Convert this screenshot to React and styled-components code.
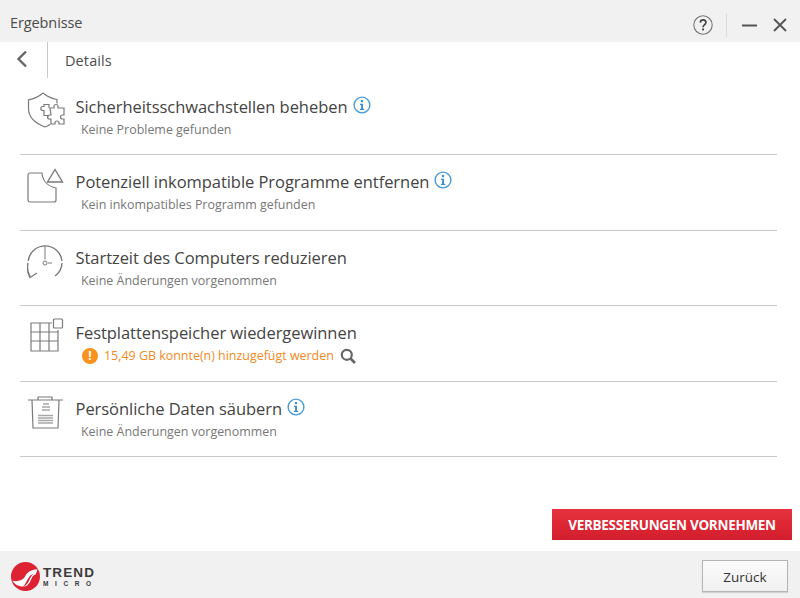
import React from "react";
import styled, { createGlobalStyle } from "styled-components";

const Global = createGlobalStyle`
  html, body { margin: 0; padding: 0; background: #fff; }
  body { font-family: "Open Sans", "Noto Sans", "Liberation Sans", sans-serif; }
`;

const Page = styled.div`
  width: 800px;
  height: 598px;
  display: flex;
  flex-direction: column;
  overflow: hidden;
  background: #fff;
`;

const TitleBar = styled.header`
  height: 42px;
  flex: none;
  display: flex;
  align-items: center;
  justify-content: space-between;
  padding: 0 13px 0 10px;
  background: #f1f1f1;
`;

const WindowTitle = styled.div`
  font-size: 14.5px;
  color: #4b4b4b;
  letter-spacing: -0.1px;
  margin-top: 2px;
`;

const WindowControls = styled.div`
  display: flex;
  align-items: center;
  margin-top: 7px;
`;

const ControlIcon = styled.svg`
  display: block;
  margin-left: ${(p) => p.$gap || 0}px;
`;

const ControlSeparator = styled.div`
  width: 1px;
  height: 24px;
  background: #dcdcdc;
  margin-left: 13px;
`;

const SubHeader = styled.div`
  height: 36px;
  flex: none;
  display: flex;
  align-items: center;
`;

const BackSlot = styled.div`
  width: 48px;
  height: 36px;
  display: flex;
  align-items: center;
  padding: 0 0 2px 16px;
  box-sizing: border-box;
  border-right: 1px solid #c9c9c9;
`;

const SubTitle = styled.div`
  margin: 1px 0 0 17px;
  font-size: 14.5px;
  color: #4d4d4d;
  letter-spacing: 0.1px;
`;

const Main = styled.main`
  flex: 1;
  display: flex;
  flex-direction: column;
  min-height: 0;
`;

const List = styled.div`
  margin: 1.5px 23px 0 20px;
  display: flex;
  flex-direction: column;
`;

const Row = styled.section`
  height: 75.5px;
  box-sizing: border-box;
  border-bottom: 1px solid #c8c8c8;
  display: grid;
  grid-template-columns: 55.5px 1fr;
  grid-template-rows: auto auto;
  align-content: start;
`;

const RowIcon = styled.div`
  grid-row: 1 / 3;
  padding: 10.5px 0 0 7px;
`;

const RowTitle = styled.div`
  display: flex;
  align-items: center;
  gap: 5px;
  height: 30px;
  margin-top: 11.5px;
  font-size: 16.5px;
  color: #444;
  letter-spacing: -0.05px;
  white-space: nowrap;
`;

const InfoIcon = styled.svg`
  display: block;
  margin-top: -3px;
`;

const RowDetail = styled.div`
  display: flex;
  align-items: center;
  height: 18px;
  margin: -1px 0 0 5.5px;
  font-size: 12.45px;
  color: ${(p) => (p.$warn ? "#f08a24" : "#777")};
  white-space: nowrap;
`;

const WarnBadge = styled.span`
  width: 16px;
  height: 16px;
  border-radius: 50%;
  background: #f7931e;
  color: #fff;
  font-size: 12px;
  font-weight: 700;
  line-height: 16px;
  text-align: center;
  margin: 0 6px 0 1px;
`;

const SearchIcon = styled.svg`
  display: block;
  margin-left: 6px;
`;

const ActionBar = styled.div`
  margin-top: auto;
  display: flex;
  justify-content: flex-end;
  padding: 0 8px 11px 0;
`;

const PrimaryButton = styled.button`
  width: 240px;
  height: 31px;
  padding: 0;
  border: 0;
  background: linear-gradient(180deg, #e5323f 0%, #dc2433 60%, #d11f2d 100%);
  color: #fff;
  font-family: inherit;
  font-size: 13.5px;
  font-weight: 700;
  letter-spacing: -0.3px;
`;

const Footer = styled.footer`
  height: 47px;
  flex: none;
  display: flex;
  align-items: center;
  justify-content: space-between;
  padding: 0 12px 0 11px;
  background: #f1f1f1;
`;

const Logo = styled.div`
  display: flex;
  align-items: center;
  gap: 3px;
  margin-top: 4px;
`;

const LogoWords = styled.div`
  display: flex;
  flex-direction: column;
  font-family: "Liberation Sans", sans-serif;
  font-weight: 700;
  color: #3c3c3c;
  line-height: 1;
`;

const LogoTop = styled.span`
  font-size: 13.5px;
  letter-spacing: 1.1px;
`;

const LogoBottom = styled.span`
  font-size: 6.5px;
  letter-spacing: 6.6px;
  margin-top: 1px;
`;

const BackButton = styled.button`
  width: 86px;
  height: 32px;
  padding: 1px 0 0;
  margin-top: 3px;
  border: 1px solid #b5b5b5;
  background: linear-gradient(180deg, #fbfbfb, #f0f0f0);
  box-shadow: 0 1px 1px rgba(0, 0, 0, 0.12);
  color: #333;
  font-family: inherit;
  font-size: 13.5px;
`;

const Info = () => (
  <InfoIcon width="18" height="18" viewBox="0 0 18 18" fill="none">
    <circle cx="9" cy="9" r="7.9" stroke="#4a9bd8" strokeWidth="1.4" />
    <rect x="7.9" y="4" width="2.2" height="2.2" fill="#3a8fd0" />
    <path d="M7 7.8h3v5h1.2v1.1H6.9v-1.1h1.2V8.9H7z" fill="#3a8fd0" />
  </InfoIcon>
);

const stroke = { stroke: "#7a7a7a", strokeWidth: 1.2, fill: "none" };

const ShieldIcon = () => (
  <svg width="40" height="40" viewBox="0 0 40 40" {...stroke}>
    <path d="M16 3C12 6.500 7 8.800 1.500 9.800v8.700c0 8 6 14.500 16.500 18.500 2-.8 3.800-1.700 5.300-2.800" />
    <path d="M16 3c4 3.500 8.500 5.600 14 6.500v4" />
    <path d="M23 18h4v-1.500a2 2 0 0 1 4 0V18h6v7h-1.500a2 2 0 0 0 0 4H37v5h-5v-1a2 2 0 0 0-4 0v1h-4v-5h-1.500a2 2 0 0 1 0-4H24z" />
    <path d="M22 18v-3.500h-5v2h-1.200a2 2 0 0 0 0 4H17v5h4v1.500" />
  </svg>
);

const AppIcon = () => (
  <svg width="40" height="40" viewBox="0 0 40 40" {...stroke}>
    <path d="M3 7h12c.6 8 6 13.500 14 15v12a2 2 0 0 1-2 2H3a2 2 0 0 1-2-2V9a2 2 0 0 1 2-2z" />
    <path d="M28 3.500 35.500 16H20.500z" strokeWidth="1.400" />
  </svg>
);

const ClockIcon = () => (
  <svg width="40" height="40" viewBox="0 0 40 40" {...stroke}>
    <path d="M3 35A17 17 0 0 1 1 22M1.200 20A17 17 0 0 1 35 20M35 22A17 17 0 0 1 28 35" strokeWidth="1.400" />
    <path d="M0.500 30.500 3 36.500l7-4.500" strokeWidth="1.300" />
    <path d="M18 5v13.500M21 22h4" strokeWidth="1" />
    <circle cx="18" cy="22" r="2" strokeWidth="1" />
  </svg>
);

const GridIcon = () => (
  <svg width="40" height="40" viewBox="0 0 40 40" {...stroke}>
    <path d="M25 6H4v28h27V13M4 15h27M4 24h27M13 6v28M22 6v28" />
    <rect x="26.500" y="2" width="9" height="9" rx="1" />
  </svg>
);

const TrashIcon = () => (
  <svg width="40" height="40" viewBox="0 0 40 40" {...stroke}>
    <path d="M1 8h35M5 8l1 28h25l1-28M11 8V5h14v3" />
    <path d="M16 12h6M15 15h8M15 18h8M11 23.500h15M11 26h15M11 28.500h15M11 31h15" stroke="#a8a8a8" strokeWidth="1.300" />
  </svg>
);

const rows = [
  { Icon: ShieldIcon, title: "Sicherheitsschwachstellen beheben", info: true, detail: "Keine Probleme gefunden" },
  { Icon: AppIcon, title: "Potenziell inkompatible Programme entfernen", info: true, detail: "Kein inkompatibles Programm gefunden" },
  { Icon: ClockIcon, title: "Startzeit des Computers reduzieren", detail: "Keine Änderungen vorgenommen" },
  { Icon: GridIcon, title: "Festplattenspeicher wiedergewinnen", warn: true, detail: "15,49 GB konnte(n) hinzugefügt werden" },
  { Icon: TrashIcon, title: "Persönliche Daten säubern", info: true, detail: "Keine Änderungen vorgenommen" },
];

export default function App() {
  return (
    <Page>
      <Global />
      <TitleBar>
        <WindowTitle>Ergebnisse</WindowTitle>
        <WindowControls>
          <ControlIcon width="20" height="20" viewBox="0 0 20 20" fill="none">
            <circle cx="10" cy="10" r="9.200" stroke="#777" strokeWidth="1.100" />
            <path d="M7.300 7.600c.2-3.600 5.600-3.500 5.600 0 0 2.300-2.900 2.300-2.900 4.600" stroke="#444" strokeWidth="1.700" />
            <rect x="9.100" y="13.500" width="1.900" height="1.900" fill="#444" />
          </ControlIcon>
          <ControlSeparator />
          <ControlIcon $gap={15} width="15" height="15" viewBox="0 0 15 15" fill="none">
            <path d="M0 8.500h15" stroke="#555" strokeWidth="2" />
          </ControlIcon>
          <ControlIcon $gap={16} width="14" height="14" viewBox="0 0 14 14" fill="none">
            <path d="M1 1l12 12M13 1L1 13" stroke="#555" strokeWidth="1.800" />
          </ControlIcon>
        </WindowControls>
      </TitleBar>
      <SubHeader>
        <BackSlot>
          <svg width="12" height="18" viewBox="0 0 12 18" fill="none">
            <path d="M10 1.500 2.500 9l7.500 7.500" stroke="#666" strokeWidth="2.400" />
          </svg>
        </BackSlot>
        <SubTitle>Details</SubTitle>
      </SubHeader>
      <Main>
        <List>
          {rows.map(({ Icon, title, info, warn, detail }) => (
            <Row key={title}>
              <RowIcon>
                <Icon />
              </RowIcon>
              <RowTitle>
                {title}
                {info && <Info />}
              </RowTitle>
              <RowDetail $warn={warn}>
                {warn && <WarnBadge>!</WarnBadge>}
                {detail}
                {warn && (
                  <SearchIcon width="16" height="16" viewBox="0 0 16 16" fill="none">
                    <circle cx="6.800" cy="6.800" r="5" stroke="#666" strokeWidth="2.200" />
                    <path d="M10.500 10.500 15 15" stroke="#666" strokeWidth="2.600" />
                  </SearchIcon>
                )}
              </RowDetail>
            </Row>
          ))}
        </List>
        <ActionBar>
          <PrimaryButton>VERBESSERUNGEN VORNEHMEN</PrimaryButton>
        </ActionBar>
      </Main>
      <Footer>
        <Logo>
          <svg width="29" height="29" viewBox="0 0 30 30">
            <circle cx="15" cy="15" r="15" fill="#dc2233" />
            <path d="M27.500 7.500C20 8 16.500 11 14.500 15 12.500 19 7 20.500 1.500 19.500 4 24 10 26.500 15 25c4-1.200 5-5.500 6.500-8.500 1-2 2.500-3.500 4-3.500z" fill="#fff" />
            <path d="M12 25.500c3-2 4-6 6-9 1.500-2.300 3-3.500 5-4-3 2.500-3.500 6-5.500 9-1.200 2-3 3.500-5.500 4z" fill="#dc2233" />
          </svg>
          <LogoWords>
            <LogoTop>TREND</LogoTop>
            <LogoBottom>MICRO</LogoBottom>
          </LogoWords>
        </Logo>
        <BackButton>Zurück</BackButton>
      </Footer>
    </Page>
  );
}
